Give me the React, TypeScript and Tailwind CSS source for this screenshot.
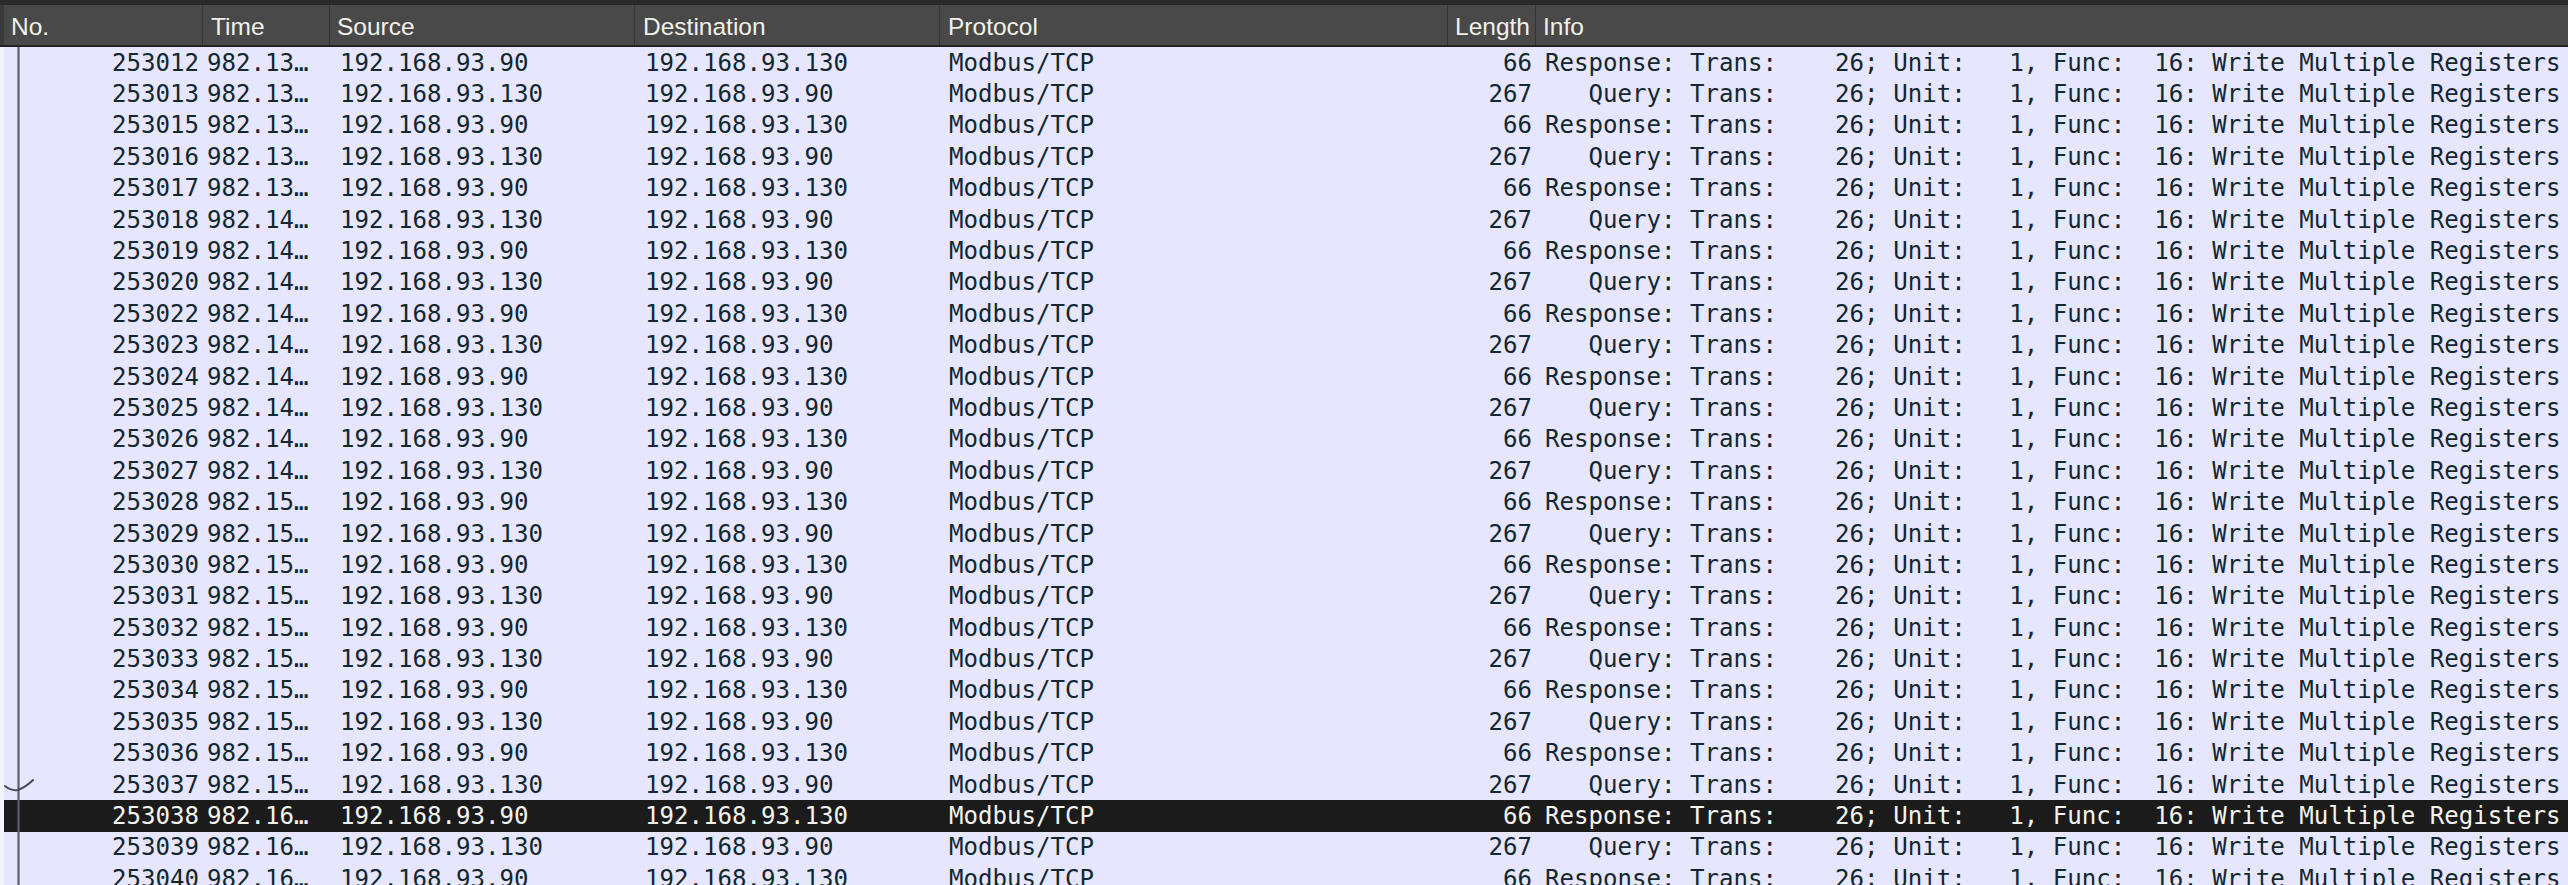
import React from "react";

type Packet = {
  no: number;
  time: string;
  src: string;
  dst: string;
  len: number;
  kind: "Response" | "Query";
};

const numbers = [
  253012, 253013, 253015, 253016, 253017, 253018, 253019, 253020, 253022,
  253023, 253024, 253025, 253026, 253027, 253028, 253029, 253030, 253031,
  253032, 253033, 253034, 253035, 253036, 253037, 253038, 253039, 253040,
];

const timeFor = (n: number) => {
  if (n <= 253017) return "982.13…";
  if (n <= 253027) return "982.14…";
  if (n <= 253037) return "982.15…";
  return "982.16…";
};

const packets: Packet[] = numbers.map((no, i) => {
  const resp = i % 2 === 0;
  return {
    no,
    time: timeFor(no),
    src: resp ? "192.168.93.90" : "192.168.93.130",
    dst: resp ? "192.168.93.130" : "192.168.93.90",
    len: resp ? 66 : 267,
    kind: resp ? "Response" : "Query",
  };
});

const SELECTED = 253038;

const mono = "font-['DejaVu_Sans_Mono','Liberation_Mono',monospace] text-[24.1px]";

function HeaderCell({
  label,
  className,
}: {
  label: string;
  className: string;
}) {
  return (
    <div
      className={`flex h-full items-center pt-[5px] border-r border-[#353535] ${className}`}
    >
      {label}
    </div>
  );
}

export default function App() {
  return (
    <div className="w-[2568px] h-[885px] overflow-hidden bg-[#f3f3fb] relative">
      {/* top strip */}
      <div className="h-[5px] bg-[#2a2a2a]" />

      {/* column header */}
      <div className="flex h-[42px] bg-[#494949] border-b-2 border-[#222] text-[#f1f1ea] font-['Liberation_Sans',Arial,sans-serif] text-[24.5px] leading-none">
        <HeaderCell label="No." className="w-[203px] pl-[7px] border-l-4 border-l-[#3a3a3a]" />
        <HeaderCell label="Time" className="w-[127px] pl-[8px]" />
        <HeaderCell label="Source" className="w-[305px] pl-[7px]" />
        <HeaderCell label="Destination" className="w-[305px] pl-[8px]" />
        <HeaderCell label="Protocol" className="w-[508px] pl-[8px]" />
        <HeaderCell label="Length" className="w-[88px] pl-[7px]" />
        <div className="flex h-full flex-1 items-center pt-[5px] pl-[7px]">Info</div>
      </div>

      {/* packet rows */}
      <div className={`pl-[4px] ${mono} leading-none`}>
        {packets.map((p) => {
          const sel = p.no === SELECTED;
          return (
            <div
              key={p.no}
              className={`flex h-[31.4px] items-center whitespace-pre ${
                sel ? "bg-[#1b1b1b] text-[#f4f4f0]" : "bg-[#e7e6ff] text-[#12272e]"
              }`}
            >
              <div className="w-[199px] pr-[4px] text-right">{p.no}</div>
              <div className="w-[127px] pl-[4px]">{p.time}</div>
              <div className="w-[305px] pl-[10px]">{p.src}</div>
              <div className="w-[305px] pl-[10px]">{p.dst}</div>
              <div className="w-[508px] pl-[9px]">Modbus/TCP</div>
              <div className="w-[88px] pr-[4px] text-right">{p.len}</div>
              <div className="flex-1 pl-[9px]">
                {`${p.kind === "Response" ? "Response" : "   Query"}: Trans:    26; Unit:   1, Func:  16: Write Multiple Registers`}
              </div>
            </div>
          );
        })}
      </div>

      {/* related packet indicator */}
      <svg
        className="absolute left-0 top-[47px] pointer-events-none"
        width="40"
        height="838"
        viewBox="0 0 40 838"
      >
        <line x1="18.5" y1="0" x2="18.5" y2="838" stroke="#5e5e70" strokeWidth="2.2" />
        <path
          d="M5 739 Q11 744 18 743 Q26 740 33 733"
          fill="none"
          stroke="#4a4a5a"
          strokeWidth="2"
          strokeLinecap="round"
        />
      </svg>
    </div>
  );
}
